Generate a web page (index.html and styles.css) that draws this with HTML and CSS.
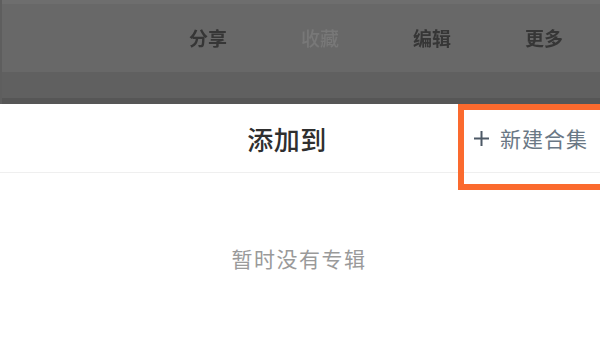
FILE: index.html
```html
<!DOCTYPE html>
<html lang="zh">
<head>
<meta charset="utf-8">
<link rel="stylesheet" href="styles.css">
</head>
<body>
<div class="dim">
  <div class="toolbar">
    <span class="tool">分享</span>
    <span class="tool faded">收藏</span>
    <span class="tool">编辑</span>
    <span class="tool">更多</span>
  </div>
  <div class="band"></div>
</div>
<div class="sheet">
  <div class="header">
    <span class="title">添加到</span>
    <span class="action">
      <svg class="plus" width="17" height="17" viewBox="0 0 17 17"><path d="M8.5 1v15M1 8.5h15" stroke="#4d5966" stroke-width="2" fill="none"/></svg>
      <span class="action-text">新建合集</span>
    </span>
    <div class="highlight"></div>
  </div>
  <div class="empty">暂时没有专辑</div>
</div>
</body>
</html>
```

FILE: styles.css
```css
html, body {
  margin: 0;
  padding: 0;
  width: 600px;
  height: 344px;
  overflow: hidden;
  background: #ffffff;
  font-family: "Noto Sans CJK SC", "Noto Sans", sans-serif;
}
.dim {
  height: 104px;
  background: #686868;
  display: flex;
  flex-direction: column;
  border-left: 2px solid #5e5e5e;
  box-sizing: border-box;
}
.toolbar {
  height: 72px;
  display: flex;
  padding-left: 150px;
  align-items: center;
  padding-bottom: 2px;
  box-sizing: border-box;
  border-top: 4px solid #6e6e6e;
}
.tool {
  width: 112px;
  text-align: center;
  font-size: 19px;
  font-weight: 700;
  color: #363636;
  filter: blur(0.6px);
}
.tool.faded {
  color: #787878;
  font-weight: 500;
}
.band {
  flex: 1;
  background: #606060;
  border-bottom: 6px solid #565656;
}
.sheet {
  display: flex;
  flex-direction: column;
}
.header {
  position: relative;
  height: 68px;
  border-bottom: 1px solid #efefef;
  display: flex;
  align-items: center;
  justify-content: center;
  padding-right: 26px;
}
.title {
  font-size: 26px;
  font-weight: 500;
  color: #2f2f2f;
  letter-spacing: 0.5px;
}
.action {
  position: absolute;
  left: 473px;
  top: 0;
  height: 68px;
  display: flex;
  align-items: center;
  gap: 10px;
}
.action-text {
  font-size: 21px;
  color: #6a7885;
  letter-spacing: 1px;
}
.highlight {
  position: absolute;
  left: 458px;
  top: 0;
  width: 160px;
  height: 86px;
  border: 6px solid #fb6a2e;
  box-sizing: border-box;
}
.empty {
  margin-top: 70px;
  text-align: center;
  font-size: 21px;
  color: #9a9a9a;
  letter-spacing: 1.5px;
  padding-right: 2px;
}
```
